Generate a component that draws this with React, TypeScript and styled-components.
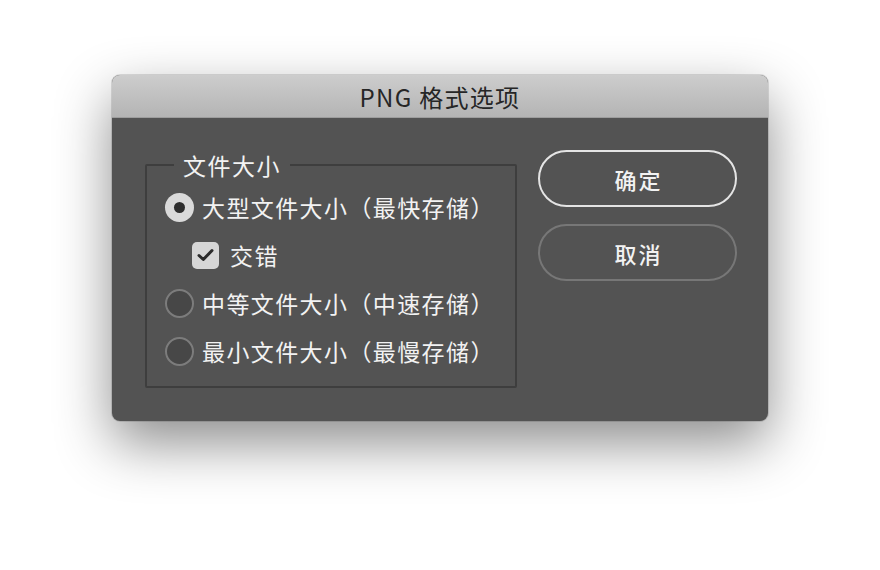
import React, { useState } from "react";
import styled, { createGlobalStyle } from "styled-components";

const Global = createGlobalStyle`
  html, body { margin: 0; padding: 0; background: #ffffff; }
  body {
    font-family: "Noto Sans CJK SC", "Noto Sans", sans-serif;
    width: 880px; height: 570px; overflow: hidden;
  }
`;

const Page = styled.div`
  display: flex;
  justify-content: center;
  padding-top: 75px;
`;

const Dialog = styled.div`
  width: 656px;
  height: 346px;
  border-radius: 8px;
  background: #535353;
  box-shadow: 0 22px 55px rgba(0, 0, 0, 0.45), 0 0 0 1px rgba(0, 0, 0, 0.12);
  display: flex;
  flex-direction: column;
  overflow: hidden;
`;

const TitleBar = styled.div`
  height: 43px;
  flex: none;
  background: linear-gradient(#cdcdcd, #b4b4b4);
  border-bottom: 1px solid #9d9d9d;
  box-sizing: border-box;
  display: flex;
  align-items: center;
  justify-content: center;
  font-size: 24px;
  color: #262626;
  letter-spacing: 1.3px;
`;

const Body = styled.div`
  flex: 1;
  display: flex;
  justify-content: space-between;
  padding: 33px 31px 33px 33px;
`;

const Group = styled.fieldset`
  margin: 0;
  width: 372px;
  box-sizing: border-box;
  border: 2px solid #3e3e3e;
  border-radius: 2px;
  padding: 0 0 0 18px;
  display: flex;
  flex-direction: column;
`;

const Legend = styled.legend`
  margin-left: 9px;
  padding: 0 9px;
  font-size: 23px;
  line-height: 28px;
  letter-spacing: 1.5px;
  color: #f2f2f2;
`;

const Options = styled.div`
  display: flex;
  flex-direction: column;
  padding-top: 4px;
`;

const Row = styled.label<{ $indent?: boolean }>`
  height: 48px;
  display: flex;
  align-items: center;
  gap: ${(p) => (p.$indent ? "11px" : "8px")};
  padding-left: ${(p) => (p.$indent ? "27px" : "0")};
  font-size: 23px;
  letter-spacing: 1.4px;
  color: #f2f2f2;
  cursor: default;
`;

const Radio = styled.span<{ $on?: boolean }>`
  width: 29px;
  height: 29px;
  box-sizing: border-box;
  border-radius: 50%;
  flex: none;
  display: flex;
  align-items: center;
  justify-content: center;
  background: ${(p) => (p.$on ? "#dadada" : "#474747")};
  border: ${(p) => (p.$on ? "none" : "2px solid #7c7c7c")};
  &::after {
    content: "";
    display: ${(p) => (p.$on ? "block" : "none")};
    width: 11px;
    height: 11px;
    border-radius: 50%;
    background: #2e2e2e;
  }
`;

const Check = styled.span`
  width: 27px;
  height: 27px;
  border-radius: 5px;
  background: #d6d6d6;
  flex: none;
  display: flex;
  align-items: center;
  justify-content: center;
`;

const Buttons = styled.div`
  display: flex;
  flex-direction: column;
  gap: 17px;
  margin-top: -1px;
`;

const Button = styled.button<{ $primary?: boolean }>`
  width: 199px;
  height: 57px;
  border-radius: 29px;
  background: transparent;
  border: 2px solid ${(p) => (p.$primary ? "#e4e4e4" : "#777777")};
  color: #f2f2f2;
  font-family: "Noto Sans CJK SC", sans-serif;
  font-size: 22px;
  font-weight: 500;
  letter-spacing: 2px;
  padding: 0 0 0 2px;
  cursor: default;
`;

const options = [
  "大型文件大小（最快存储）",
  "中等文件大小（中速存储）",
  "最小文件大小（最慢存储）",
];

export default function App() {
  const [sel] = useState(0);
  return (
    <>
      <Global />
      <Page>
        <Dialog>
          <TitleBar>PNG 格式选项</TitleBar>
          <Body>
            <Group>
              <Legend>文件大小</Legend>
              <Options>
                <Row>
                  <Radio $on={sel === 0} />
                  {options[0]}
                </Row>
                <Row $indent>
                  <Check>
                    <svg width="17" height="14" viewBox="0 0 17 14">
                      <path d="M2 7.5 L6.3 11.5 L15 2.5" fill="none" stroke="#2b2b2b" strokeWidth="3" strokeLinecap="round" strokeLinejoin="round" />
                    </svg>
                  </Check>
                  交错
                </Row>
                <Row>
                  <Radio $on={sel === 1} />
                  {options[1]}
                </Row>
                <Row>
                  <Radio $on={sel === 2} />
                  {options[2]}
                </Row>
              </Options>
            </Group>
            <Buttons>
              <Button $primary>确定</Button>
              <Button>取消</Button>
            </Buttons>
          </Body>
        </Dialog>
      </Page>
    </>
  );
}
